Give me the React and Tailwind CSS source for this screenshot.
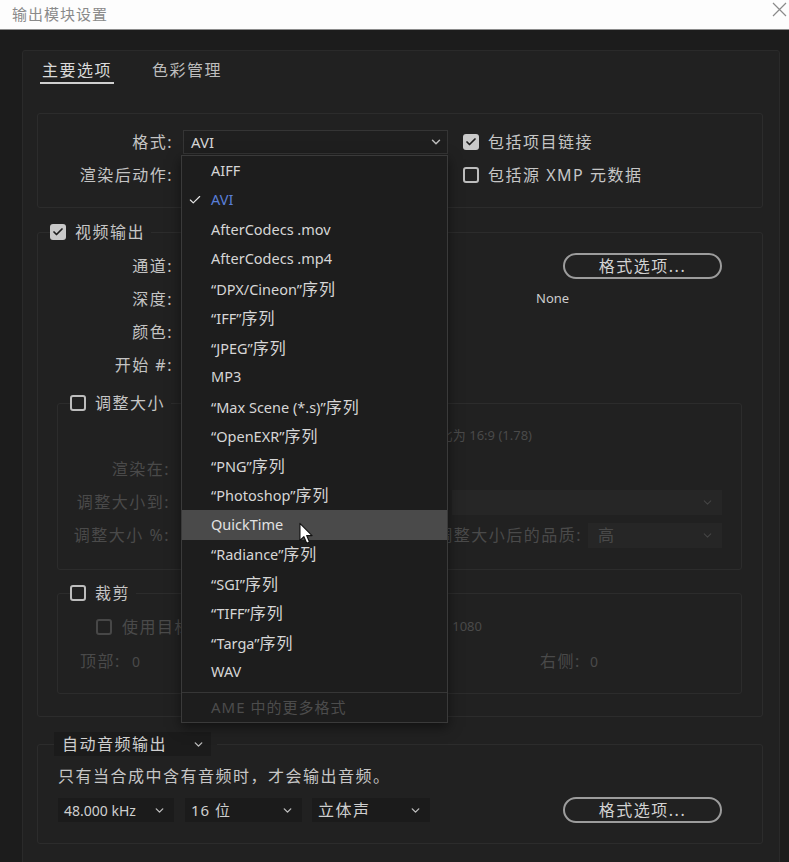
import { Check, ChevronDown } from "lucide-react";

const formats = [
  { name: "AIFF" },
  { name: "AVI", selected: true },
  { name: "AfterCodecs .mov" },
  { name: "AfterCodecs .mp4" },
  { name: "DPX/Cineon", seq: true },
  { name: "IFF", seq: true },
  { name: "JPEG", seq: true },
  { name: "MP3" },
  { name: "Max Scene (*.s)", seq: true },
  { name: "OpenEXR", seq: true },
  { name: "PNG", seq: true },
  { name: "Photoshop", seq: true },
  { name: "QuickTime", hover: true },
  { name: "Radiance", seq: true },
  { name: "SGI", seq: true },
  { name: "TIFF", seq: true },
  { name: "Targa", seq: true },
  { name: "WAV" },
];

function CheckBox({ checked, dim }) {
  if (checked) {
    return (
      <span className="flex h-4 w-4 shrink-0 items-center justify-center rounded-[3px] bg-[#c9c9c9]">
        <Check size={12} strokeWidth={3.5} color="#1e1e1e" />
      </span>
    );
  }
  return (
    <span
      className={
        dim
          ? "h-4 w-4 shrink-0 rounded-[3px] border-2 border-[#474747]"
          : "h-4 w-4 shrink-0 rounded-[3px] border-2 border-[#bdbdbd]"
      }
    />
  );
}

function Label({ children, dim, width = "w-[135px]" }) {
  return (
    <span
      className={`${width} shrink-0 text-right text-[16px] tracking-[1.5px] ${dim ? "text-[#4a4a4a]" : "text-[#c4c4c4]"}`}
    >
      {children}
    </span>
  );
}

function PillButton() {
  return (
    <button className="ml-auto mr-[40px] flex h-[26px] w-[159px] items-center justify-center rounded-full border-2 border-[#9c9c9c] text-[16px] tracking-[1.5px] text-[#d2d2d2]">
      格式选项...
    </button>
  );
}

function SmallSelect({ children, width }) {
  return (
    <div className={`flex h-[24px] ${width} items-center justify-between bg-[#1b1b1b] pl-[6px] pr-[8px] text-[#cfcfcf]`}>
      <span>{children}</span>
      <ChevronDown size={13} strokeWidth={2.5} color="#bdbdbd" />
    </div>
  );
}

function FormatMenu() {
  return (
    <div className="absolute left-[-3px] top-[24px] z-10 w-[267px] border border-[#3a3a3a] bg-[#1d1d1d] shadow-[0_4px_12px_rgba(0,0,0,0.5)]">
      {formats.map((item) => (
        <div
          key={item.name}
          className={`flex h-[29.5px] items-center ${item.hover ? "bg-[#4a4a4a]" : ""}`}
        >
          <span className="w-[29px] shrink-0 pl-[6px]">
            {item.selected ? <Check size={14} strokeWidth={2} color="#e6e6e6" /> : null}
          </span>
          <span
            className={`text-[14.5px] ${item.selected ? "text-[#5a7fd8]" : item.hover ? "text-[#e2e2e2]" : "text-[#d6d6d6]"}`}
          >
            {item.seq ? (
              <>
                “{item.name}”<span className="text-[16px] tracking-[1px]">序列</span>
              </>
            ) : (
              item.name
            )}
          </span>
        </div>
      ))}
      <div className="mt-[5px] flex h-[30px] items-center border-t border-[#363636] pl-[29px] text-[15px] tracking-[1px] text-[#4c4c4c]">
        AME 中的更多格式
      </div>
      <svg
        className="absolute left-[117px] top-[366px]"
        width="14"
        height="23"
        viewBox="0 0 12 19"
      >
        <path
          d="M0.8 0.8 L0.8 15.5 L4.2 12.2 L6.6 17.8 L9 16.8 L6.6 11.3 L11.2 11.3 Z"
          fill="#ffffff"
          stroke="#111111"
          strokeWidth="1"
          strokeLinejoin="round"
        />
      </svg>
    </div>
  );
}

export default function App() {
  return (
    <div className="h-[862px] w-[789px] overflow-hidden bg-[#1c1c1c] font-['Noto_Sans','Noto_Sans_CJK_SC',sans-serif] text-[#c6c6c6]">
      <header className="flex h-[30px] items-center justify-between border-b border-[#8c8c8c] bg-[#fdfdfd] pl-[12px] pr-[2px]">
        <span className="text-[15px] tracking-[1px] text-[#8a8a8a]">输出模块设置</span>
        <svg className="mb-[10px]" width="15" height="15" viewBox="0 0 15 15">
          <path d="M1 1 L14 14 M14 1 L1 14" stroke="#8a8a8a" strokeWidth="1.2" />
        </svg>
      </header>

      <div className="pl-[22px] pt-[20px]">
        <div className="h-[830px] w-[758px] rounded-[3px] border border-[#2a2a2a] bg-[#212121] pl-[14px] pr-[16px]">
          {/* tabs */}
          <div className="ml-[3px] mt-[7px] flex gap-[38px] text-[16px] tracking-[1.5px]">
            <span className="border-b-2 border-[#d0d0d0] px-[2px] leading-6 text-[#dadada]">主要选项</span>
            <span className="leading-6 text-[#bdbdbd]">色彩管理</span>
          </div>

          {/* format block */}
          <div className="mt-[29px] rounded-[3px] border border-[#2c2c2c] pb-[20px] pt-[16px]">
            <div className="flex h-6 items-center">
              <Label>格式:</Label>
              <div className="relative ml-[10px] flex h-6 w-[265px] items-center justify-between border border-[#353535] bg-[#1f1f1f] pl-[7px] pr-[4px]">
                <span className="text-[15px] text-[#d6d6d6]">AVI</span>
                <ChevronDown size={14} strokeWidth={2.5} color="#bdbdbd" />
                <FormatMenu />
              </div>
              <div className="ml-[15px] flex items-center gap-[9px]">
                <CheckBox checked />
                <span className="text-[16px] tracking-[1.5px] text-[#c6c6c6]">包括项目链接</span>
              </div>
            </div>
            <div className="mt-[9px] flex h-6 items-center">
              <Label>渲染后动作:</Label>
              <div className="ml-[290px] flex items-center gap-[9px]">
                <CheckBox />
                <span className="text-[16px] tracking-[1.5px] text-[#c6c6c6]">包括源 XMP 元数据</span>
              </div>
            </div>
          </div>

          {/* video output */}
          <fieldset className="mt-[12px] rounded-[3px] border border-[#2c2c2c] pb-[22px]">
            <legend className="ml-[12px] pr-[6px]">
              <div className="flex h-6 items-center gap-[9px]">
                <CheckBox checked />
                <span className="text-[16px] tracking-[1.5px]">视频输出</span>
              </div>
            </legend>

            <div className="mt-[10px] flex flex-col gap-[9px]">
              <div className="flex h-6 items-center">
                <Label>通道:</Label>
                <PillButton />
              </div>
              <div className="flex h-6 items-center">
                <Label>深度:</Label>
                <span className="ml-[363px] text-[13px] text-[#cdcdcd]">None</span>
              </div>
              <div className="flex h-6 items-center">
                <Label>颜色:</Label>
              </div>
              <div className="flex h-6 items-center">
                <Label>开始 #:</Label>
              </div>
            </div>

            {/* resize */}
            <fieldset className="ml-[19px] mr-[20px] mt-[14px] rounded-[3px] border border-[#2c2c2c] pb-[22px]">
              <legend className="ml-[12px] pr-[6px]">
                <div className="flex h-6 items-center gap-[9px]">
                  <CheckBox />
                  <span className="text-[16px] tracking-[1.5px]">调整大小</span>
                </div>
              </legend>
              <div className="mt-[9px] flex flex-col gap-[9px] text-[#4a4a4a]">
                <div className="flex h-6 items-center">
                  <span className="w-[474px] text-right text-[13px]">锁定长宽比为 16:9 (1.78)</span>
                </div>
                <div className="flex h-6 items-center">
                  <Label dim width="w-[112px]">渲染在:</Label>
                </div>
                <div className="flex h-6 items-center">
                  <Label dim width="w-[112px]">调整大小到:</Label>
                  <div className="ml-[282px] flex h-[25px] w-[270px] items-center justify-end bg-[#262626] pr-[8px]">
                    <ChevronDown size={13} strokeWidth={2} color="#444444" />
                  </div>
                </div>
                <div className="flex h-6 items-center">
                  <Label dim width="w-[112px]">调整大小 %:</Label>
                  <span className="w-[412px] shrink-0 text-right text-[16px] tracking-[1.5px]">调整大小后的品质:</span>
                  <div className="ml-[6px] flex h-[25px] w-[134px] items-center justify-between bg-[#262626] pl-[10px] pr-[8px]">
                    <span className="text-[16px]">高</span>
                    <ChevronDown size={13} strokeWidth={2} color="#444444" />
                  </div>
                </div>
              </div>
            </fieldset>

            {/* crop */}
            <fieldset className="ml-[19px] mr-[20px] mt-[11px] rounded-[3px] border border-[#2c2c2c] pb-[20px]">
              <legend className="ml-[12px] pr-[6px]">
                <div className="flex h-6 items-center gap-[9px]">
                  <CheckBox />
                  <span className="text-[16px] tracking-[1.5px]">裁剪</span>
                </div>
              </legend>
              <div className="mt-[10px] flex flex-col gap-[10px] text-[#4a4a4a]">
                <div className="flex h-6 w-[424px] items-center pl-[38px]">
                  <CheckBox dim />
                  <span className="ml-[10px] text-[16px] tracking-[1.5px]">使用目标区域</span>
                  <span className="ml-auto text-[13px]">1080</span>
                </div>
                <div className="flex h-6 items-center pl-[22px] text-[16px]">
                  <span className="w-[52px] tracking-[1.5px]">顶部:</span>
                  <span className="w-[408px] text-[14px]">0</span>
                  <span className="w-[50px] tracking-[1.5px]">右侧:</span>
                  <span className="text-[14px]">0</span>
                </div>
              </div>
            </fieldset>
          </fieldset>

          {/* audio */}
          <fieldset className="mt-[15px] rounded-[3px] border border-[#2c2c2c] pb-[20px]">
            <legend className="ml-[16px] pr-[6px]">
              <div className="flex h-6 w-[157px] items-center justify-between bg-[#1b1b1b] pl-[8px] pr-[6px]">
                <span className="text-[16px] tracking-[1.5px] text-[#cfcfcf]">自动音频输出</span>
                <ChevronDown size={13} strokeWidth={2.5} color="#bdbdbd" />
              </div>
            </legend>
            <div className="pl-[20px]">
              <div className="mt-[8px] flex h-6 items-center text-[16px] tracking-[1.5px] text-[#c6c6c6]">
                只有当合成中含有音频时，才会输出音频。
              </div>
              <div className="mt-[9px] flex items-center">
                <SmallSelect width="w-[116px]">
                  <span className="text-[14px]">48.000 kHz</span>
                </SmallSelect>
                <div className="ml-[11px]">
                  <SmallSelect width="w-[117px]">
                    <span className="text-[15px] tracking-[1px]">16 位</span>
                  </SmallSelect>
                </div>
                <div className="ml-[10px]">
                  <SmallSelect width="w-[118px]">
                    <span className="text-[16px] tracking-[1.5px]">立体声</span>
                  </SmallSelect>
                </div>
                <PillButton />
              </div>
            </div>
          </fieldset>
        </div>
      </div>
    </div>
  );
}
